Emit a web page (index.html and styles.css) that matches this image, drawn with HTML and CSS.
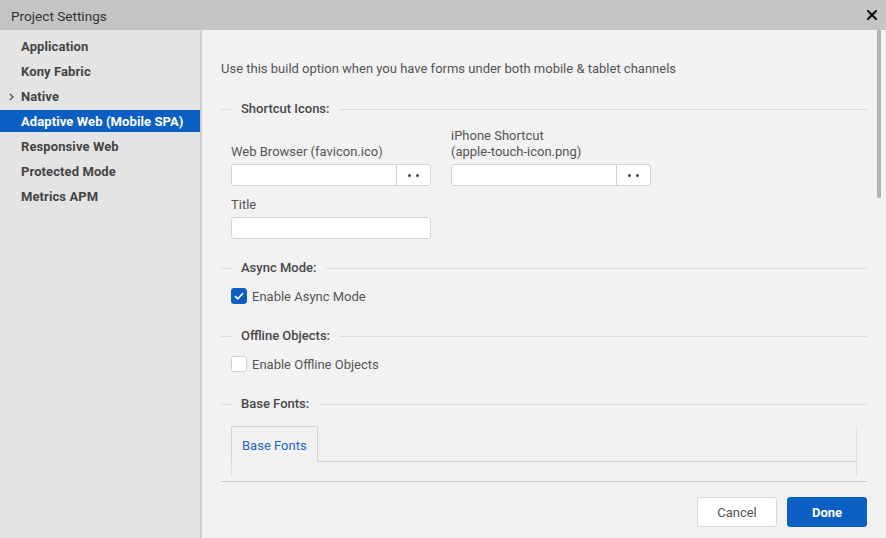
FILE: index.html
```html
<!DOCTYPE html>
<html lang="en">
<head>
<meta charset="utf-8">
<title>Project Settings</title>
<link rel="stylesheet" href="styles.css">
</head>
<body>
<div class="dialog">
  <header class="titlebar">
    <span class="title">Project Settings</span>
    <button class="close" aria-label="Close">
      <svg width="10" height="10" viewBox="0 0 10 10"><path d="M1 1L9 9M9 1L1 9" stroke="#111" stroke-width="2.2" stroke-linecap="square" fill="none"/></svg>
    </button>
  </header>
  <div class="body">
    <nav class="sidebar">
      <ul class="nav">
        <li class="nav-item"><span class="twisty"></span>Application</li>
        <li class="nav-item"><span class="twisty"></span>Kony Fabric</li>
        <li class="nav-item"><span class="twisty"><svg width="5" height="8" viewBox="0 0 5 8"><path d="M0.8 0.8L4 4L0.8 7.2" stroke="#444" stroke-width="1.2" fill="none"/></svg></span>Native</li>
        <li class="nav-item active"><span class="twisty"></span>Adaptive Web (Mobile SPA)</li>
        <li class="nav-item"><span class="twisty"></span>Responsive Web</li>
        <li class="nav-item"><span class="twisty"></span>Protected Mode</li>
        <li class="nav-item"><span class="twisty"></span>Metrics APM</li>
      </ul>
    </nav>
    <main class="main">
      <div class="scroll">
        <p class="desc">Use this build option when you have forms under both mobile &amp; tablet channels</p>

        <section class="group group-first">
          <div class="group-head"><span>Shortcut Icons:</span></div>
          <div class="group-body">
            <div class="field-row">
              <div class="field">
                <label class="label">Web Browser (favicon.ico)</label>
                <div class="picker"><input class="picker-input" type="text"><button class="dots"><i></i><i></i></button></div>
              </div>
              <div class="field">
                <label class="label">iPhone Shortcut<br>(apple-touch-icon.png)</label>
                <div class="picker"><input class="picker-input" type="text"><button class="dots"><i></i><i></i></button></div>
              </div>
            </div>
            <div class="field field-title">
              <label class="label">Title</label>
              <input class="text-input" type="text">
            </div>
          </div>
        </section>

        <section class="group group-after-fields">
          <div class="group-head"><span>Async Mode:</span></div>
          <div class="group-body">
            <label class="check">
              <span class="box checked"><svg width="10" height="8" viewBox="0 0 10 8"><path d="M1 4.2L3.7 6.8L9 1.3" stroke="#fff" stroke-width="1.6" fill="none"/></svg></span>
              <span class="check-text">Enable Async Mode</span>
            </label>
          </div>
        </section>

        <section class="group">
          <div class="group-head"><span>Offline Objects:</span></div>
          <div class="group-body">
            <label class="check">
              <span class="box"></span>
              <span class="check-text">Enable Offline Objects</span>
            </label>
          </div>
        </section>

        <section class="group">
          <div class="group-head"><span>Base Fonts:</span></div>
          <div class="group-body">
            <div class="tabs">
              <div class="tab-strip"><span class="tab active">Base Fonts</span><span class="tab-rest"></span></div>
              <div class="tab-panel"></div>
            </div>
          </div>
        </section>
      </div>
      <div class="scroll-thumb"></div>
      <footer class="footer">
        <button class="btn">Cancel</button>
        <button class="btn primary">Done</button>
      </footer>
    </main>
  </div>
</div>
</body>
</html>
```
FILE: styles.css
```css
* { box-sizing: border-box; }
html, body { margin: 0; padding: 0; }
body {
  width: 886px;
  height: 538px;
  overflow: hidden;
  font-family: Roboto, "Noto Sans", sans-serif;
  font-size: 13px;
  color: #555;
  background: #f2f2f2;
}
.dialog { display: flex; flex-direction: column; width: 886px; height: 538px; }

.titlebar {
  height: 30px;
  flex: none;
  background: #c4c4c4;
  display: flex;
  align-items: center;
  justify-content: space-between;
  padding: 0 9px 0 11px;
}
.title { font-size: 13.6px; color: #333; line-height: 16px; padding-top: 1px; }
.close {
  border: 0; background: none; padding: 0; margin: 0;
  width: 10px; height: 10px; display: flex;
}

.body { flex: 1; display: flex; min-height: 0; }

.sidebar {
  width: 202px;
  flex: none;
  background: #e4e4e4;
  border-right: 2px solid #cdcdcd;
  padding-top: 5px;
}
.nav { list-style: none; margin: 0; padding: 0; display: flex; flex-direction: column; gap: 3px; }
.nav-item {
  height: 22px;
  display: flex;
  align-items: center;
  padding-left: 8px;
  padding-top: 1px;
  font-weight: 700;
  font-size: 13px;
  color: #444;
  letter-spacing: 0.1px;
}
.twisty { width: 13px; flex: none; display: flex; align-items: center; padding-left: 1px; }
.nav-item.active { background: #0b5fc3; color: #fff; }

.main { flex: 1; display: flex; flex-direction: column; min-width: 0; position: relative; }
.scroll {
  height: 447px;
  flex: none;
  overflow: hidden;
  padding: 32px 19px 16px 19px;
}
.scroll-thumb {
  position: absolute;
  top: 0;
  right: 5px;
  width: 4px;
  height: 168px;
  background: #b4b4b4;
  border-radius: 1px;
}

.desc { margin: 0; line-height: 14px; color: #555; }

.group { margin-top: 25px; }
.group-first { margin-top: 26px; }
.group-after-fields { margin-top: 22px; }
.group-head {
  display: flex;
  align-items: center;
  height: 14px;
  line-height: 14px;
  color: #484848;
  font-weight: 500;
}
.group-head::before { content: ""; width: 10px; height: 1px; background: #dadada; margin-right: 10px; }
.group-head::after { content: ""; flex: 1; height: 1px; background: #dadada; margin-left: 10px; }

.group-body { padding-left: 10px; padding-right: 10px; }

.field-row { display: flex; gap: 20px; align-items: flex-end; margin-top: 11px; }
.field { width: 200px; display: flex; flex-direction: column; }
.label { line-height: 16px; color: #555; padding-top: 1px; margin-bottom: 4px; }
.field-title { margin-top: 10px; }

.picker {
  display: flex;
  height: 22px;
  background: #fff;
  border: 1px solid #d2d2d2;
  border-radius: 3px;
}
.picker-input { flex: 1; min-width: 0; border: 0; background: transparent; outline: none; padding: 0 6px; }
.dots {
  width: 34px;
  flex: none;
  border: 0;
  border-left: 1px solid #d2d2d2;
  background: transparent;
  display: flex;
  align-items: center;
  justify-content: center;
  gap: 5px;
  padding: 0;
}
.dots i { width: 3px; height: 3px; border-radius: 50%; background: #444; display: block; }

.text-input {
  height: 22px;
  width: 200px;
  background: #fff;
  border: 1px solid #d2d2d2;
  border-radius: 3px;
  outline: none;
}

.check {
  display: flex;
  align-items: center;
  gap: 5px;
  margin-top: 13px;
  line-height: 16px;
  color: #555;
}
.check-text { padding-top: 1px; line-height: 15px; }
.box {
  width: 16px; height: 16px; flex: none;
  border: 1px solid #cfcfcf;
  border-radius: 3px;
  background: #fff;
  display: flex; align-items: center; justify-content: center;
}
.box.checked { background: #0b5fc3; border-color: #0b5fc3; }

.tabs { margin-top: 15px; }
.tab-strip { display: flex; height: 36px; }
.tab {
  height: 36px;
  padding: 2px 10px 0;
  border: 1px solid #d3d3d3;
  border-bottom: 0;
  display: flex;
  align-items: center;
  color: #1f66c1;
  line-height: 14px;
  background: #f2f2f2;
}
.tab-rest { flex: 1; border-bottom: 1px solid #d3d3d3; border-right: 1px solid #e0e0e0; }
.tab-panel {
  height: 740px;
  border-left: 1px solid #e0e0e0;
  border-right: 1px solid #e0e0e0;
}

.footer {
  flex: 1;
  margin: 4px 19px 0 19px;
  border-top: 1px solid #cbcbcb;
  padding-top: 15px;
  display: flex;
  justify-content: flex-end;
  align-items: flex-start;
  gap: 10px;
}
.btn {
  width: 80px;
  height: 30px;
  border: 1px solid #d8d8d8;
  border-radius: 3px;
  background: #fff;
  color: #555;
  font-family: Roboto, "Noto Sans", sans-serif;
  font-size: 13px;
  padding: 0;
}
.btn.primary { background: #0b5fc3; border-color: #0b5fc3; color: #fff; font-weight: 700; }
```
